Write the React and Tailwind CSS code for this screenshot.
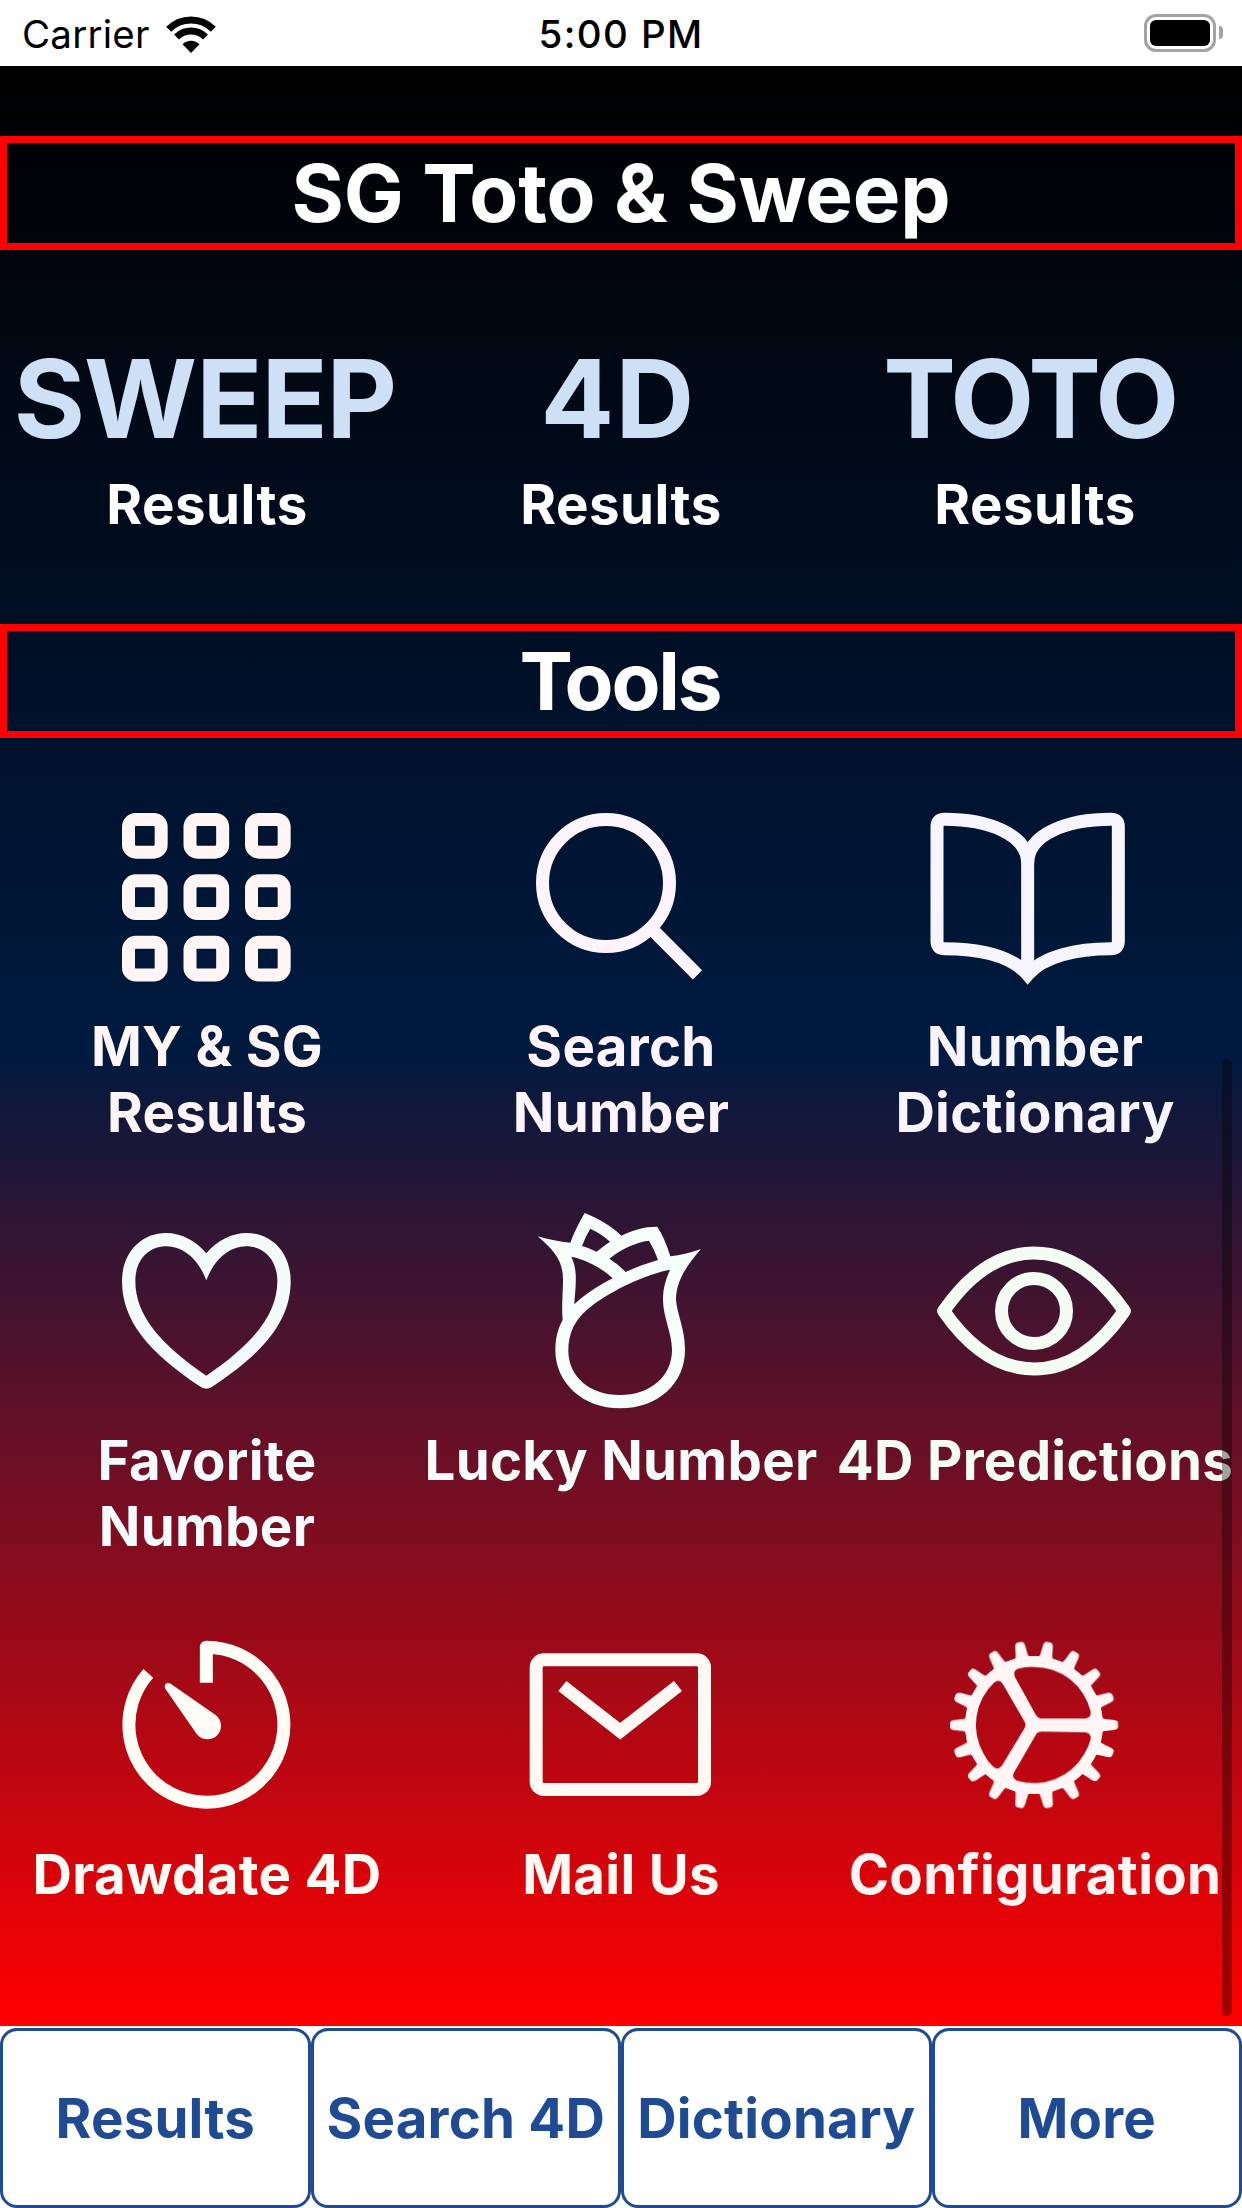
const GridIcon = () => (
  <svg viewBox="-240 -126 1242 825" className="w-[414px] h-[275px]" fill="none" stroke="currentColor" strokeWidth="39">
    {[145.5, 330, 514.5].map((x) =>
      [118.5, 302.5, 487].map((y) => <rect key={`${x}-${y}`} x={x} y={y} width="98" height="98" rx="22" />)
    )}
  </svg>
);

const SearchIcon = () => (
  <svg viewBox="-228 -126 1242 825" className="w-[414px] h-[275px]" fill="none" stroke="currentColor" strokeWidth="39">
    <circle cx="348" cy="309" r="190.5" />
    <path d="M484 446 L622.5 584.5" />
  </svg>
);

const BookIcon = () => (
  <svg viewBox="-156 -126 1242 825" className="w-[414px] h-[275px]" fill="none" stroke="currentColor" strokeWidth="39">
    <path d="M443 250 C443 160 320 118 193 118 Q171 118 171 140 V484 Q171 506 193 506 C300 506 395 528 443 584 C491 528 590 506 693 506 Q715 506 715 484 V140 Q715 118 693 118 C566 118 443 160 443 250 Z" />
    <path d="M443 230 V575" />
  </svg>
);

const HeartIcon = () => (
  <svg viewBox="-240 -144 1242 825" className="w-[414px] h-[275px]" fill="currentColor" fillRule="evenodd">
    <path d="M379 160 C347 122 303 99 258 99 C182 99 126 160 126 243 C126 362 205 456 358 558 Q379 574 400 558 C553 456 632 362 632 243 C632 160 576 99 500 99 C455 99 411 122 379 160 Z M379 241 C355 176 308 139 260 139 C204 139 166 182 166 243 C166 345 240 432 379 527 C518 432 592 345 592 243 C592 182 554 139 498 139 C450 139 403 176 379 241 Z" />
  </svg>
);

const RoseIcon = () => (
  <svg viewBox="-18 -144 1242 825" className="w-[414px] h-[275px]" fill="currentColor" fillRule="evenodd">
    <path
      d="M353 109 C385 119 420 125 451 128 C462 98 478 66 494 39 C532 54 574 78 604 107 C638 90 672 80 712 80 C728 105 741 135 751 169 Q795 164 843 147 C800 195 768 245 768 298 C770 340 795 385 795 450 C795 550 715 625 600 625 C490 625 406 550 406 450 C406 415 414 385 428 360 C424 320 429 280 429 238 C429 180 400 150 353 109 Z
        M511 86 Q545 102 570 125 Q550 138 530 155 Q508 144 486 138 Q496 110 511 86 Z
        M568 176 C605 147 645 127 687 122 Q704 150 714 180 C680 190 645 203 617 216 Q597 194 568 176 Z
        M454 170 C500 180 545 203 578 235 C535 257 495 283 463 313 C465 265 476 215 454 170 Z
        M750 209 C660 228 560 280 500 330 C465 360 445 400 445 452 C445 530 510 585 600 585 C690 585 756 530 756 450 C756 400 729 350 729 300 C729 265 737 240 750 209 Z"
    />
  </svg>
);

const EyeIcon = () => (
  <svg viewBox="18 -144 1242 825" className="w-[414px] h-[275px]" fill="none" stroke="currentColor" strokeWidth="39" strokeLinejoin="round">
    <path d="M365 333 C440 225 530 159 636 159 S832 225 907 333 C832 441 742 507 636 507 S440 441 365 333 Z" />
    <circle cx="636" cy="333" r="97.5" />
  </svg>
);

const TimerIcon = () => (
  <svg viewBox="-60 -162 1242 825" className="w-[414px] h-[275px]" fill="none" stroke="currentColor" strokeWidth="39" strokeLinejoin="round">
    <path d="M559 188 V81.5 A232.5 232.5 0 1 1 385 160" />
    <path
      d="M436 206 C430 194 440 185 452 191 L586 284 C598 293 603 306 603 319 A40 40 0 0 1 563 358 C549 358 538 352 530 342 Z"
      fill="currentColor"
      stroke="none"
    />
  </svg>
);

const MailIcon = () => (
  <svg viewBox="-258 -162 1242 825" className="w-[414px] h-[275px]" fill="none" stroke="currentColor" strokeWidth="39">
    <rect x="108.5" y="119.5" width="505" height="389" rx="23" />
    <path d="M187 198 L360.5 333.5 L534 198" />
  </svg>
);

const teeth = Array.from({ length: 18 }, (_, i) => i * 20);

const GearIcon = () => (
  <svg viewBox="-42 -162 1242 825" className="w-[414px] h-[275px]" fill="currentColor">
    <mask id="gear-holes">
      <rect x="300" y="40" width="560" height="560" fill="white" />
      {[0, 120, 240].map((angle) => (
        <path
          key={angle}
          transform={`rotate(${angle} 576 315)`}
          d="M597 295.500 H730 Q748 295 746 275 A174 174 0 0 0 576 141 Q550 140 530 146 Q512 150 518 170 L581 284 Q587 295 597 295.500 Z"
          fill="black"
        />
      ))}
    </mask>
    <g mask="url(#gear-holes)">
      <circle cx="576" cy="315" r="207" />
      {teeth.map((angle) => (
        <path
          key={angle}
          transform={`translate(576 315) rotate(${angle})`}
          d="M196 -30 Q203 -19 213 -18 L240 -15 Q252 -13 252 -6 V6 Q252 13 240 15 L213 18 Q203 19 196 30 Z"
        />
      ))}
    </g>
  </svg>
);

const results = [
  { title: 'SWEEP', style: '-translate-x-[2px] tracking-[-1px]' },
  { title: '4D', style: '-translate-x-[3px] tracking-[1.3px]' },
  { title: 'TOTO', style: '-translate-x-[5px] tracking-[-2.4px]' },
];

const tools = [
  { icon: GridIcon, lines: ['MY & SG', 'Results'], color: 'text-[#fff5f5]' },
  { icon: SearchIcon, lines: ['Search', 'Number'], color: 'text-[#fef4fe]' },
  { icon: BookIcon, lines: ['Number', 'Dictionary'], color: 'text-[#f6f4fd]' },
  { icon: HeartIcon, lines: ['Favorite', 'Number'], color: 'text-[#f3fbfd]' },
  { icon: RoseIcon, lines: ['Lucky Number'], color: 'text-[#f4fdfa]' },
  { icon: EyeIcon, lines: ['4D Predictions'], color: 'text-[#f3fdf3]' },
  { icon: TimerIcon, lines: ['Drawdate 4D'], color: 'text-[#fdfdf5]' },
  { icon: MailIcon, lines: ['Mail Us'], color: 'text-[#fefaf3]' },
  { icon: GearIcon, lines: ['Configuration'], color: 'text-[#fef5f4]' },
];

const tabs = ['Results', 'Search 4D', 'Dictionary', 'More'];

const StatusBar = () => (
  <div className="grid h-[66px] grid-cols-3 items-center bg-white pt-[2px] text-[38.5px] leading-[47px] text-black">
    <div className="flex items-center gap-[16px] pl-[22px]">
      <span className="tracking-[0.2px]">Carrier</span>
      <svg viewBox="0 0 50 37" className="h-[37px] w-[50px]" fill="none" stroke="black" strokeWidth="7">
        <path d="M2.700 13.200 A31.500 31.500 0 0 1 47.300 13.200" />
        <path d="M10.500 21 A20.500 20.500 0 0 1 39.500 21" />
        <path d="M25 37 L16.500 28.200 A12 12 0 0 1 33.500 28.200 Z" fill="black" stroke="none" />
      </svg>
    </div>
    <div className="text-center font-medium tracking-[1.4px]">5:00 PM</div>
    <div className="flex items-center justify-end gap-[3px] pr-[19px] pb-[3px]">
      <div className="h-[38px] w-[72px] rounded-[12px] border-[3px] border-[#a3a3a3] p-[3px]">
        <div className="h-full w-full rounded-[6px] bg-black" />
      </div>
      <div className="h-[13px] w-[4px] rounded-r-full bg-[#a3a3a3]" />
    </div>
  </div>
);

const SectionTitle = ({ children, tracking = 'tracking-[-0.2px]' }) => (
  <h2 className={`flex h-[114px] items-center justify-center border-[7px] border-[#ff0000] text-[80px] font-bold text-white ${tracking}`}>
    {children}
  </h2>
);

export default function App() {
  return (
    <div className="flex h-[2208px] w-[1242px] flex-col overflow-hidden bg-white font-['Inter','Liberation_Sans',sans-serif]">
      <StatusBar />

      <main className="relative h-[1960px] bg-[linear-gradient(to_bottom,#000000,#001a40_50%,#ff0000)] pt-[70px]">
        <SectionTitle>SG Toto &amp; Sweep</SectionTitle>

        <div className="grid h-[374px] grid-cols-3 pt-[82px] text-center font-bold">
          {results.map((item) => (
            <div key={item.title}>
              <div className={`text-[109px] leading-[132px] text-[#cde0f6] ${item.style}`}>{item.title}</div>
              <div className="mt-[7px] text-[54.6px] leading-[66px] tracking-[0.5px] text-white">Results</div>
            </div>
          ))}
        </div>

        <SectionTitle tracking="pr-[2px] tracking-[-2.2px]">Tools</SectionTitle>

        <div className="grid auto-rows-[414px] grid-cols-3">
          {tools.map(({ icon: Icon, lines, color }) => (
            <div key={lines.join(' ')} className={`flex flex-col items-center ${color}`}>
              <Icon />
              {lines.map((line) => (
                <span key={line} className="text-[54.6px] leading-[66px] font-bold tracking-[0.3px] whitespace-nowrap">
                  {line}
                </span>
              ))}
            </div>
          ))}
        </div>

        {/* Scroll indicator */}
        <div className="absolute top-[993px] right-[10px] h-[957px] w-[10px] rounded-full bg-black/35" />
      </main>

      <nav className="grid flex-1 grid-cols-4 pt-[2px]">
        {tabs.map((tab) => (
          <button key={tab} className="rounded-[17px] border-[3px] border-[#1f4a94] text-[54.6px] leading-[66px] font-bold tracking-[0.2px] whitespace-nowrap text-[#1f4a94]">
            {tab}
          </button>
        ))}
      </nav>
    </div>
  );
}
